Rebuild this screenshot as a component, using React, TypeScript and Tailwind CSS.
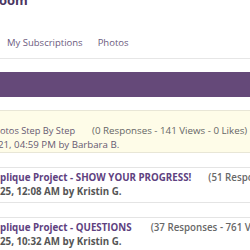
import React from "react";

const font = { fontFamily: '"Open Sans", "Liberation Sans", sans-serif' };

function Row({
  title,
  stats,
  meta,
  gap,
}: {
  title: string;
  stats: string;
  meta: string;
  gap: string;
}) {
  return (
    <div className="mt-[14px] border-y border-[#e4e4e4] bg-white pt-[3px] pb-[3px] text-[9.75px] leading-[14px] whitespace-nowrap">
      <div className={`flex ${gap}`}>
        <span className="font-bold text-[#5e4180]">{title}</span>
        <span className="font-semibold text-[#686868]">{stats}</span>
      </div>
      <div className="font-bold text-[#555555]">{meta}</div>
    </div>
  );
}

export default function App() {
  return (
    <div className="w-[250px] h-[250px] overflow-hidden bg-white" style={font}>
      <div className="h-[6px] overflow-hidden">
        <div className="mt-[-6.5px] ml-[-1px] text-[13px] leading-[13px] font-bold text-[#4b3561] whitespace-nowrap">
          oom
        </div>
      </div>
      <div className="mt-[30px] flex gap-[15px] pl-[7px] pb-[8px] border-b border-[#e6e6e6] text-[9.5px] leading-[14px] text-[#6b5a7e] whitespace-nowrap">
        <span>My Subscriptions</span>
        <span>Photos</span>
      </div>
      <div className="mt-[13px] h-[25px] bg-[#654979]" />
      <div className="mt-[13px] border-y border-[#e8e6d6] bg-[#fefce8] pt-[13px] pb-0 leading-[14px] whitespace-nowrap">
        <div className="flex gap-[17px]">
          <span className="text-[9.25px] text-[#665a72]">otos Step By Step</span>
          <span className="text-[9.75px] text-[#666666]">(0 Responses - 141 Views - 0 Likes)</span>
        </div>
        <div className="ml-[-2px] text-[9.7px] text-[#665a72]">21, 04:59 PM by Barbara B.</div>
      </div>
      <Row
        title="plique Project - SHOW YOUR PROGRESS!"
        stats="(51 Responses - 1,204 Views - 3 Likes)"
        meta="25, 12:08 AM by Kristin G."
        gap="gap-[17px]"
      />
      <Row
        title="plique Project - QUESTIONS"
        stats="(37 Responses - 761 Views - 0 Likes)"
        meta="25, 10:32 AM by Kristin G."
        gap="gap-[19px]"
      />
    </div>
  );
}
